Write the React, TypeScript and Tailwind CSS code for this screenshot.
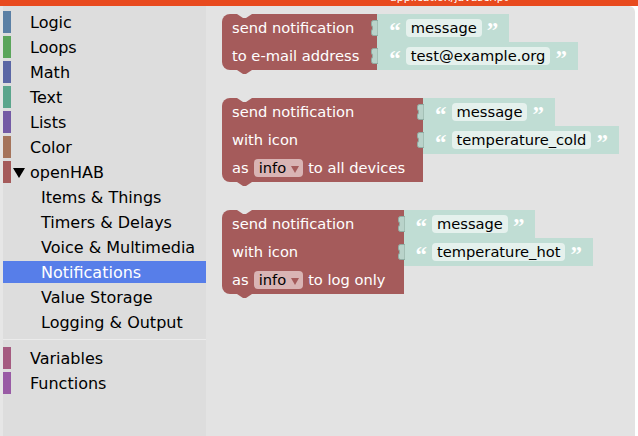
import type { ReactNode } from "react";
import clsx from "clsx";

const categories = [
  { name: "Logic", color: "bg-[#5b80a5]" },
  { name: "Loops", color: "bg-[#5ba55b]" },
  { name: "Math", color: "bg-[#5b67a5]" },
  { name: "Text", color: "bg-[#5ba58c]" },
  { name: "Lists", color: "bg-[#745ba5]" },
  { name: "Color", color: "bg-[#a5745b]" },
];

const openhabItems = [
  "Items & Things",
  "Timers & Delays",
  "Voice & Multimedia",
  "Notifications",
  "Value Storage",
  "Logging & Output",
];

function Category({ name, color }: { name: string; color: string }) {
  return (
    <div className="mb-[3px] flex h-[22px] items-center">
      <span className={clsx("h-full w-[8px]", color)} />
      <span className="ml-[19px] mt-[2px] text-[16px] text-black">{name}</span>
    </div>
  );
}

function SubItem({ name, active }: { name: string; active?: boolean }) {
  return (
    <div
      className={clsx(
        "mb-[3px] flex h-[22px] items-center pl-[38px] pt-[2px] text-[16px]",
        active ? "bg-[#577ee9] text-white" : "text-black"
      )}
    >
      {name}
    </div>
  );
}

function Quote({ children }: { children: string }) {
  return (
    <span className="mt-[4px] font-['Liberation_Serif',serif] text-[23px] leading-none font-bold text-white">
      {children}
    </span>
  );
}

// light "text" shadow block plugged into an input
function TextInput({ value }: { value: string }) {
  return (
    <div className="relative flex h-[28px] items-center self-start bg-[#c0ddd4] pl-[12px] pr-[11px]">
      <svg className="absolute left-[-6px] top-[6px]" width="7" height="16" viewBox="0 0 7 16">
        <path
          d="M7,0.5 L2.5,0.5 Q0.5,0.5 0.5,2.5 L0.5,5 Q3,8 0.5,11 L0.5,13.5 Q0.5,15.5 2.5,15.5 L7,15.5 Z"
          fill="#b9d3ca"
          stroke="#8fada3"
          strokeWidth="1"
        />
      </svg>
      <Quote>“</Quote>
      <span className="ml-[5px] h-[18px] rounded-[4px] bg-[#e5f1ed] px-[5px] text-[11pt] leading-[18px] text-black">
        {value}
      </span>
      <span className="ml-[5px] flex">
        <Quote>”</Quote>
      </span>
    </div>
  );
}

function Dropdown({ value }: { value: string }) {
  return (
    <span className="flex h-[18px] items-center rounded-[4px] bg-[#d9b4b4] pl-[5px] pr-[4px] text-black">
      {value}
      <svg className="ml-[5px] mt-[2px]" width="8" height="7" viewBox="0 0 8 7">
        <polygon points="0,0 8,0 4,7" fill="#a55b5b" />
      </svg>
    </span>
  );
}

function NotifyBlock({ rows, inputs }: { rows: ReactNode[]; inputs: string[] }) {
  return (
    <div className="flex items-start">
      <div className="relative flex flex-col rounded-l-[8px] bg-[#a55b5b] pl-[10px] pr-[18px] text-[11pt] text-white">
        {rows.map((row, i) => (
          <div key={i} className="flex h-[28px] items-center gap-[5px] whitespace-nowrap">
            {row}
          </div>
        ))}
        <svg className="absolute left-[15px] top-0" width="15" height="4" viewBox="0 0 15 4">
          <polygon points="0,0 6,4 9,4 15,0" fill="#e3e3e3" />
        </svg>
        <svg className="absolute left-[15px] top-full" width="15" height="4" viewBox="0 0 15 4">
          <polygon points="0,0 6,4 9,4 15,0" fill="#a55b5b" />
        </svg>
      </div>
      <div className="flex flex-col">
        {inputs.map((v) => (
          <TextInput key={v} value={v} />
        ))}
      </div>
    </div>
  );
}

export default function App() {
  return (
    <div className="flex h-[436px] w-[638px] flex-col overflow-hidden bg-[#e6e6e6] font-['DejaVu_Sans',sans-serif]">
      <div className="h-[6px] shrink-0 overflow-hidden bg-[#e84a1e] pl-[390px]">
        <div className="-mt-[9px] text-[11px] leading-[13px] text-white">application/javascript</div>
      </div>

      <div className="flex flex-1">
        <aside className="ml-[3px] w-[203px] bg-[#dddddd] pt-[5px]">
          {categories.map((c) => (
            <Category key={c.name} name={c.name} color={c.color} />
          ))}
          <div className="mb-[3px] flex h-[22px] items-center">
            <span className="h-full w-[8px] bg-[#a55b5b]" />
            <svg className="ml-[2px] mt-[2px]" width="12" height="10" viewBox="0 0 12 10">
              <polygon points="0,0 12,0 6,10" fill="#000" />
            </svg>
            <span className="ml-[5px] mt-[2px] text-[16px] text-black">openHAB</span>
          </div>
          {openhabItems.map((name) => (
            <SubItem key={name} name={name} active={name === "Notifications"} />
          ))}
          <div className="mb-[7px] mt-[6px] h-px bg-[#ebebeb]" />
          <Category name="Variables" color="bg-[#a55b80]" />
          <Category name="Functions" color="bg-[#995ba5]" />
        </aside>

        <div className="flex-1 bg-white pr-[3px]">
          <main className="flex h-full flex-col gap-[28px] rounded-tr-[6px] bg-[#e3e3e3] pl-[16px] pt-[8px]">
            <NotifyBlock
              rows={["send notification", "to e-mail address"]}
              inputs={["message", "test@example.org"]}
            />
            <NotifyBlock
              rows={[
                "send notification",
                "with icon",
                <>
                  as <Dropdown value="info" /> to all devices
                </>,
              ]}
              inputs={["message", "temperature_cold"]}
            />
            <NotifyBlock
              rows={[
                "send notification",
                "with icon",
                <>
                  as <Dropdown value="info" /> to log only
                </>,
              ]}
              inputs={["message", "temperature_hot"]}
            />
          </main>
        </div>
      </div>
    </div>
  );
}
